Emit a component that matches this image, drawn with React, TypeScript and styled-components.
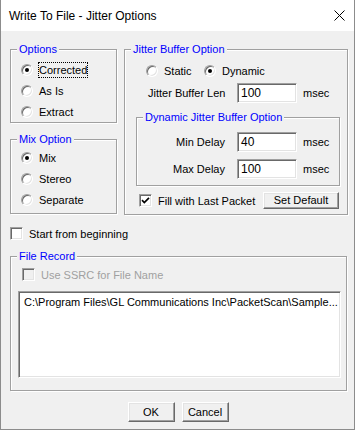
import styled, { createGlobalStyle, css } from "styled-components"

const GlobalStyle = createGlobalStyle`
  html, body {
    margin: 0;
    padding: 0;
    background: #f0f0f0;
  }
  * {
    box-sizing: border-box;
  }
`

const Window = styled.div`
  width: 355px;
  height: 430px;
  display: flex;
  flex-direction: column;
  background: #f0f0f0;
  border: 1px solid #8c8c8c;
  border-top: none;
  font-family: "Liberation Sans", Arial, sans-serif;
  font-size: 11px;
  color: #000;
`

const TitleBar = styled.div`
  height: 31px;
  flex: none;
  display: flex;
  align-items: center;
  justify-content: space-between;
  padding: 0 9px 0 8px;
  background: #fff;
  font-size: 12px;
`

const Body = styled.div`
  flex: 1;
  display: flex;
  flex-direction: column;
  padding: 18px 6px 0 9px;
`

const TopRow = styled.div`
  display: flex;
  align-items: flex-start;
  gap: 7px;
`

const Column = styled.div`
  display: flex;
  flex-direction: column;
`

const GroupBox = styled.div<{ $w: number; $h: number; $mt?: number; $ml?: number; $pt?: number; $pl?: number }>`
  position: relative;
  flex: none;
  width: ${({ $w }) => $w}px;
  height: ${({ $h }) => $h}px;
  margin-top: ${({ $mt }) => $mt || 0}px;
  margin-left: ${({ $ml }) => $ml || 0}px;
  padding-top: ${({ $pt }) => $pt || 0}px;
  padding-left: ${({ $pl }) => $pl || 0}px;
  border: 1px solid #a0a0a0;
  box-shadow: inset 1px 1px 0 #fff, 1px 1px 0 #fff;
  display: flex;
  flex-direction: column;
`

const Legend = styled.span`
  position: absolute;
  top: -7px;
  left: 6px;
  padding: 0 2px;
  line-height: 13px;
  background: #f0f0f0;
  color: #0000ff;
  white-space: nowrap;
`

const Row = styled.div<{ $h?: number; $mt?: number; $pl?: number }>`
  display: flex;
  align-items: center;
  height: ${({ $h }) => $h || 21}px;
  margin-top: ${({ $mt }) => $mt || 0}px;
  padding-left: ${({ $pl }) => $pl || 0}px;
  white-space: nowrap;
`

const Choice = styled.label<{ $w?: number }>`
  display: flex;
  align-items: center;
  gap: 5px;
  ${({ $w }) =>
    $w &&
    css`
      width: ${$w}px;
    `}
`

const RadioCircle = styled.span<{ $checked?: boolean }>`
  position: relative;
  flex: none;
  width: 12px;
  height: 12px;
  border-radius: 50%;
  background: #fff;
  border: 1px solid;
  border-color: #a0a0a0 #fff #fff #a0a0a0;
  box-shadow: inset 1px 1px 0 #696969, inset -1px -1px 0 #e3e3e3;

  ${({ $checked }) =>
    $checked &&
    css`
      &::after {
        content: "";
        position: absolute;
        left: 3px;
        top: 3px;
        width: 4px;
        height: 4px;
        border-radius: 50%;
        background: #000;
      }
    `}
`

const Caption = styled.span<{ $focus?: boolean; $disabled?: boolean }>`
  padding: 1px;
  line-height: 14px;
  color: ${({ $disabled }) => ($disabled ? "#a0a0a0" : "#000")};
  ${({ $focus }) =>
    $focus &&
    css`
      outline: 1px dotted #000;
      outline-offset: -1px;
    `}
`

const CheckBox = styled.span<{ $disabled?: boolean }>`
  flex: none;
  width: 13px;
  height: 13px;
  display: flex;
  align-items: center;
  justify-content: center;
  background: ${({ $disabled }) => ($disabled ? "#f0f0f0" : "#fff")};
  border: 1px solid;
  border-color: #a0a0a0 #fff #fff #a0a0a0;
  box-shadow: inset 1px 1px 0 #696969, inset -1px -1px 0 #e3e3e3;
`

const FieldLabel = styled.span<{ $w: number; $right?: boolean }>`
  width: ${({ $w }) => $w}px;
  flex: none;
  text-align: ${({ $right }) => ($right ? "right" : "left")};
  padding-right: ${({ $right }) => ($right ? 12 : 0)}px;
`

const TextBox = styled.div`
  flex: none;
  width: 60px;
  height: 20px;
  display: flex;
  align-items: center;
  padding-left: 3px;
  background: #fff;
  border: 1px solid;
  border-color: #a0a0a0 #fff #fff #a0a0a0;
  box-shadow: inset 1px 1px 0 #696969, inset -1px -1px 0 #e3e3e3;
  font-size: 12px;
`

const Unit = styled.span`
  margin-left: 6px;
`

const Button = styled.button<{ $w: number; $h: number }>`
  flex: none;
  width: ${({ $w }) => $w}px;
  height: ${({ $h }) => $h}px;
  padding: 0;
  background: #f0f0f0;
  border: 1px solid;
  border-color: #fff #696969 #696969 #fff;
  box-shadow: inset -1px -1px 0 #a0a0a0, inset 1px 1px 0 #e3e3e3;
  font-family: "Liberation Sans", Arial, sans-serif;
  font-size: 11px;
  color: #000;
  line-height: 1;
`

const ListBox = styled.div`
  width: 323px;
  height: 87px;
  margin: 10px 0 0 7px;
  padding: 3px 5px;
  background: #fff;
  border: 1px solid;
  border-color: #a0a0a0 #fff #fff #a0a0a0;
  box-shadow: inset 1px 1px 0 #696969, inset -1px -1px 0 #e3e3e3;
  line-height: 14px;
  white-space: nowrap;
`

const ButtonRow = styled.div`
  display: flex;
  justify-content: center;
  gap: 7px;
  margin-top: 11px;
  padding-right: 2px;
`

const Check = () => (
  <svg width="9" height="9" viewBox="0 0 9 9">
    <path d="M1 4.2 L3.3 6.5 L8 1.8" fill="none" stroke="#000" strokeWidth="1.7" />
  </svg>
)

const CloseIcon = () => (
  <svg width="11" height="11" viewBox="0 0 11 11">
    <path d="M0.5 0.5 L10.5 10.5 M10.5 0.5 L0.5 10.5" stroke="#000" strokeWidth="1" />
  </svg>
)

const Radio = ({ label, checked, focus, w }: { label: string; checked?: boolean; focus?: boolean; w?: number }) => (
  <Choice $w={w}>
    <RadioCircle $checked={checked} />
    <Caption $focus={focus}>{label}</Caption>
  </Choice>
)

const App = () => {
  return (
    <>
      <GlobalStyle />
      <Window>
        <TitleBar>
          <span>Write To File - Jitter Options</span>
          <CloseIcon />
        </TitleBar>
        <Body>
          <TopRow>
            <Column>
              <GroupBox $w={107} $h={74} $pt={9} $pl={10}>
                <Legend>Options</Legend>
                <Row><Radio label="Corrected" checked focus /></Row>
                <Row><Radio label="As Is" /></Row>
                <Row><Radio label="Extract" /></Row>
              </GroupBox>
              <GroupBox $w={107} $h={75} $mt={16} $pt={7} $pl={10}>
                <Legend>Mix Option</Legend>
                <Row><Radio label="Mix" checked /></Row>
                <Row><Radio label="Stereo" /></Row>
                <Row><Radio label="Separate" /></Row>
              </GroupBox>
            </Column>

            <GroupBox $w={224} $h={166} $pt={10}>
              <Legend>Jitter Buffer Option</Legend>
              <Row $pl={21}>
                <Radio label="Static" w={58} />
                <Radio label="Dynamic" checked />
              </Row>
              <Row $h={20} $mt={2} $pl={23}>
                <FieldLabel $w={89}>Jitter Buffer Len</FieldLabel>
                <TextBox>100</TextBox>
                <Unit>msec</Unit>
              </Row>

              <GroupBox $w={204} $h={69} $mt={14} $ml={11} $pt={14}>
                <Legend>Dynamic Jitter Buffer Option</Legend>
                <Row $h={20}>
                  <FieldLabel $w={100} $right>Min Delay</FieldLabel>
                  <TextBox>40</TextBox>
                  <Unit>msec</Unit>
                </Row>
                <Row $h={20} $mt={7}>
                  <FieldLabel $w={100} $right>Max Delay</FieldLabel>
                  <TextBox>100</TextBox>
                  <Unit>msec</Unit>
                </Row>
              </GroupBox>

              <Row $h={17} $mt={6} $pl={14}>
                <Choice $w={124}>
                  <CheckBox><Check /></CheckBox>
                  <Caption>Fill with Last Packet</Caption>
                </Choice>
                <Button $w={76} $h={17}>Set Default</Button>
              </Row>
            </GroupBox>
          </TopRow>

          <Row $h={13} $mt={12}>
            <Choice>
              <CheckBox />
              <Caption>Start from beginning</Caption>
            </Choice>
          </Row>

          <GroupBox $w={337} $h={135} $mt={16} $pt={11}>
            <Legend>File Record</Legend>
            <Row $h={13} $pl={11}>
              <Choice>
                <CheckBox $disabled />
                <Caption $disabled>Use SSRC for File Name</Caption>
              </Choice>
            </Row>
            <ListBox>
              {"C:\\Program Files\\GL Communications Inc\\PacketScan\\Sample..."}
            </ListBox>
          </GroupBox>

          <ButtonRow>
            <Button $w={47} $h={20}>OK</Button>
            <Button $w={47} $h={20}>Cancel</Button>
          </ButtonRow>
        </Body>
      </Window>
    </>
  )
}

export default App
